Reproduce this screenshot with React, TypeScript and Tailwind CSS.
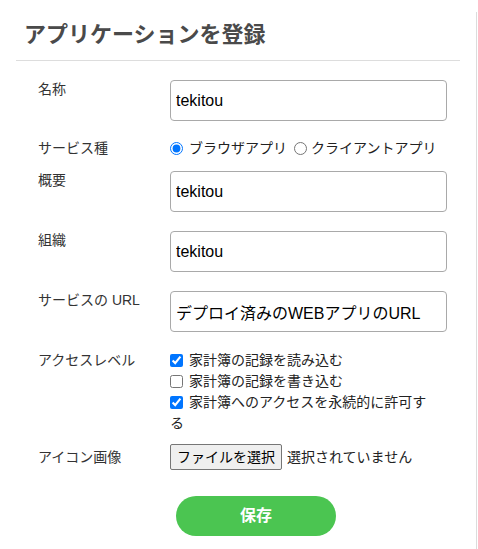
import { useState } from 'react';

const font = "font-['Liberation_Sans','Noto_Sans_CJK_JP',sans-serif]";

function TextRow({ label, value, className }: { label: string; value: string; className?: string }) {
  return (
    <div className={`flex items-start ${className ?? ''}`}>
      <div className="w-[132px] -mt-[1.5px] text-[14px] leading-[21px] text-[#333]">{label}</div>
      <input
        readOnly
        value={value}
        className="h-[41px] w-[277px] rounded-[4px] border border-[#a9a9a9] bg-white px-[5px] text-[16px] text-black outline-none"
      />
    </div>
  );
}

export default function App() {
  const [service, setService] = useState('browser');
  const [access, setAccess] = useState({ read: true, write: false, forever: true });

  return (
    <div className={`w-[478px] h-[549px] overflow-hidden bg-white ${font}`}>
      <div className="mt-[12px] h-[537px] w-[477px] border-r border-[#dcdcdc]">
        {/* Header */}
        <h1 className="pl-[24px] pt-[6px] text-[22px] leading-[33px] font-bold text-[#4a4a4a]">
          アプリケーションを登録
        </h1>
        <div className="mx-[16px] mt-[9px] border-t border-[#dddddd]" />

        {/* Form */}
        <div className="pl-[38px] pt-[19px]">
          <TextRow label="名称" value="tekitou" />

          <div className="mt-[17px] flex items-start text-[14px] leading-[21px] text-[#333]">
            <div className="w-[132px]">サービス種</div>
            <label className="flex items-center">
              <input
                type="radio"
                name="service"
                checked={service === 'browser'}
                onChange={() => setService('browser')}
                className="m-0 h-[13px] w-[13px]"
              />
              <span className="ml-[6px] text-[#222]">ブラウザアプリ</span>
            </label>
            <label className="ml-[7px] flex items-center">
              <input
                type="radio"
                name="service"
                checked={service === 'client'}
                onChange={() => setService('client')}
                className="m-0 h-[13px] w-[13px]"
              />
              <span className="ml-[4px] text-[#222]">クライアントアプリ</span>
            </label>
          </div>

          <TextRow label="概要" value="tekitou" className="mt-[12px]" />
          <TextRow label="組織" value="tekitou" className="mt-[19px]" />
          <TextRow label="サービスの URL" value="デプロイ済みのWEBアプリのURL" className="mt-[19px]" />

          {/* Access level */}
          <div className="mt-[18px] flex items-start text-[14px] leading-[21px] text-[#333]">
            <div className="w-[132px] shrink-0">アクセスレベル</div>
            <div className="w-[264px] text-[#222]">
              <label className="block">
                <input
                  type="checkbox"
                  checked={access.read}
                  onChange={() => setAccess({ ...access, read: !access.read })}
                  className="m-0 mr-[6px] h-[13px] w-[13px] align-[-2px]"
                />
                家計簿の記録を読み込む
              </label>
              <label className="block">
                <input
                  type="checkbox"
                  checked={access.write}
                  onChange={() => setAccess({ ...access, write: !access.write })}
                  className="m-0 mr-[6px] h-[13px] w-[13px] align-[-2px]"
                />
                家計簿の記録を書き込む
              </label>
              <label className="block">
                <input
                  type="checkbox"
                  checked={access.forever}
                  onChange={() => setAccess({ ...access, forever: !access.forever })}
                  className="m-0 mr-[6px] h-[13px] w-[13px] align-[-2px]"
                />
                家計簿へのアクセスを永続的に許可する
              </label>
            </div>
          </div>

          {/* Icon image */}
          <div className="mt-[10px] flex items-center text-[14px] text-[#333]">
            <div className="w-[132px]">アイコン画像</div>
            <button className="h-[26px] rounded-[2px] border border-[#767676] bg-[#efefef] px-[6px] text-[14px] text-black">
              ファイルを選択
            </button>
            <span className="ml-[5px] text-[#222]">選択されていません</span>
          </div>
        </div>

        {/* Save */}
        <div className="mt-[26px] flex pl-[176px]">
          <button className="h-[40px] w-[160px] rounded-full bg-[#4bc551] text-[16px] font-bold text-white">
            保存
          </button>
        </div>
      </div>
    </div>
  );
}
